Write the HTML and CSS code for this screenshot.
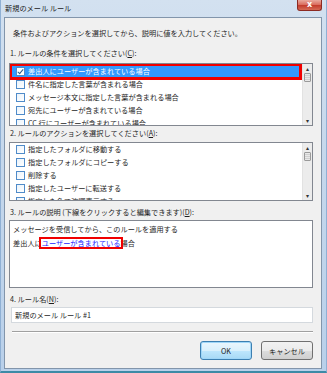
FILE: index.html
```html
<!DOCTYPE html>
<html>
  <head>
    <meta charset="utf-8">
    <link rel="stylesheet" href="styles.css">
  </head>
  <body>
    <div class="window">
      <div class="titlebar">
        <span class="title">新規のメール ルール</span>
        <span class="close">x</span>
      </div>

      <div class="client">
        <p class="intro">条件およびアクションを選択してから、説明に値を入力してください。</p>

        <div class="label label1">1. ルールの条件を選択してください(<u>C</u>):</div>
        <div class="listbox list1">
          <ul class="items">
            <li class="selected"><span class="check checked"></span>差出人にユーザーが含まれている場合</li>
            <li><span class="check"></span>件名に指定した言葉が含まれる場合</li>
            <li><span class="check"></span>メッセージ本文に指定した言葉が含まれる場合</li>
            <li><span class="check"></span>宛先にユーザーが含まれている場合</li>
            <li class="partial"><span class="check"></span>CC 行にユーザーが含まれている場合</li>
          </ul>
          <div class="scrollbar">
            <span class="arrow">&#9652;</span>
            <span class="thumb"></span>
            <span class="track"></span>
            <span class="arrow">&#9662;</span>
          </div>
        </div>

        <div class="label label2">2. ルールのアクションを選択してください(<u>A</u>):</div>
        <div class="listbox list2">
          <ul class="items">
            <li><span class="check"></span>指定したフォルダに移動する</li>
            <li><span class="check"></span>指定したフォルダにコピーする</li>
            <li><span class="check"></span>削除する</li>
            <li><span class="check"></span>指定したユーザーに転送する</li>
            <li class="partial"><span class="check"></span>指定した色で強調表示する</li>
          </ul>
          <div class="scrollbar">
            <span class="arrow">&#9652;</span>
            <span class="thumb"></span>
            <span class="track"></span>
            <span class="arrow">&#9662;</span>
          </div>
        </div>

        <div class="label label3">3. ルールの説明 (下線をクリックすると編集できます)(<u>D</u>):</div>
        <div class="description">
          <div class="line">メッセージを受信してから、このルールを適用する</div>
          <div class="line">差出人に<a href="#" class="marked">ユーザーが含まれている</a>場合</div>
        </div>

        <div class="label label4">4. ルール名(<u>N</u>):</div>
        <input type="text" class="name" value="新規のメール ルール #1">

        <div class="separator"></div>

        <div class="buttons">
          <button class="default">OK</button>
          <button>キャンセル</button>
        </div>
      </div>
    </div>
  </body>
</html>
```

FILE: styles.css
```css
html, body {
  margin: 0;
  padding: 0;
}

body {
  font-family: "Noto Sans CJK JP", "Noto Sans", sans-serif;
  font-size: 7.2px;
  color: #1e1e1e;
}

.window {
  width: 327px;
  height: 373px;
  box-sizing: border-box;
  display: flex;
  flex-direction: column;
  background: linear-gradient(to bottom, #d3e1f0 0%, #c6d8ec 40%, #b9d0ea 100%);
  border-left: 1px solid #8fb0d4;
  border-right: 1px solid #8fb0d4;
  border-bottom: 2px solid #3d8aa6;
}

.titlebar {
  height: 17px;
  display: flex;
  justify-content: space-between;
  align-items: flex-start;
  padding-left: 4px;
  padding-right: 4px;
}

.title {
  line-height: 17px;
  color: #222;
}

.close {
  width: 25px;
  height: 11px;
  line-height: 9px;
  text-align: center;
  color: #fff;
  font-family: "DejaVu Sans", sans-serif;
  font-weight: bold;
  font-size: 8px;
  border: 1px solid #8c2a22;
  border-top: none;
  border-radius: 0 0 3px 3px;
  box-sizing: border-box;
  background: linear-gradient(to bottom, #e9a99d 0%, #d9695a 50%, #c2392a 51%, #d56a54 100%);
}

.client {
  flex: 1;
  margin: 0 4px 2px 3px;
  background: #f0f0f0;
  border: 1px solid #8295ab;
  padding: 0 8px 0 4px;
  display: flex;
  flex-direction: column;
}

.intro {
  margin: 9px 0 0 4px;
  line-height: 13px;
}

.label {
  line-height: 13px;
  padding-left: 1px;
}

.label1 {
  margin-top: 7px;
}

.label2 {
  margin-top: 1px;
}

.label3,
.label4 {
  margin-top: 5px;
}

.label u {
  text-decoration: underline;
}

.listbox {
  box-sizing: border-box;
  border: 1px solid #828790;
  background: #fff;
  display: flex;
  overflow: hidden;
  flex: none;
}

.list1 {
  margin-top: 3px;
  height: 63px;
}

.list2 {
  margin-top: 2px;
  height: 59px;
}

.items {
  flex: 1;
  list-style: none;
  margin: 0;
  padding: 1px 1px 0 1px;
  overflow: hidden;
}

.items li {
  height: 13px;
  line-height: 13px;
  display: flex;
  align-items: center;
  padding-left: 5px;
  white-space: nowrap;
}

.list2 .items {
  padding-top: 0;
}

.items li.selected {
  background: #3399ff;
  color: #fff;
  position: relative;
}

.items li.selected::after {
  content: "";
  position: absolute;
  left: -2px;
  right: -1px;
  top: -2px;
  bottom: -2px;
  border: 3px solid #f00000;
}

.check {
  width: 9px;
  height: 9px;
  box-sizing: border-box;
  border: 1px solid #4f8bc9;
  background: linear-gradient(135deg, #eaf3fb, #ffffff);
  margin-right: 3px;
  flex: none;
  position: relative;
}

.check.checked {
  background: #fff;
}

.check.checked::before {
  content: "";
  position: absolute;
  left: 2px;
  top: 0;
  width: 2px;
  height: 5px;
  border-right: 1px solid #2a5a8e;
  border-bottom: 1px solid #2a5a8e;
  transform: rotate(40deg);
}

.scrollbar {
  width: 9px;
  flex: none;
  background: #ececec;
  border-left: 1px solid #e2e2e2;
  display: flex;
  flex-direction: column;
  align-items: center;
}

.arrow {
  height: 9px;
  line-height: 9px;
  font-size: 6px;
  color: #333;
  font-family: "DejaVu Sans", sans-serif;
}

.thumb {
  width: 7px;
  height: 9px;
  box-sizing: border-box;
  border: 1px solid #9a9a9a;
  border-radius: 1px;
  background: repeating-linear-gradient(to bottom, #e8e8e8 0, #e8e8e8 1px, #cfcfcf 1px, #cfcfcf 2px);
}

.track {
  flex: 1;
}

.description {
  margin-top: 1px;
  height: 68px;
  flex: none;
  box-sizing: border-box;
  border: 1px solid #828790;
  background: #fff;
  padding: 1px 0 0 3px;
}

.description .line {
  line-height: 14px;
  height: 14px;
}

.marked {
  color: #1a1aff;
  text-decoration: underline;
  position: relative;
}

.marked::after {
  content: "";
  position: absolute;
  left: -3px;
  right: -3px;
  top: -1px;
  bottom: -1px;
  border: 2px solid #f00000;
}

.name {
  height: 16px;
  flex: none;
  box-sizing: border-box;
  border: 1px solid #d4d9de;
  background: #fff;
  font-family: inherit;
  font-size: 7.2px;
  color: #1e1e1e;
  padding: 0 3px;
  margin: 1px 0 0 2px;
}

.separator {
  margin: 8px 0 0 3px;
  height: 1px;
  background: #a0a0a0;
  border-bottom: 1px solid #fff;
}

.buttons {
  margin-top: 8px;
  display: flex;
  justify-content: flex-end;
  gap: 9px;
}

.buttons button {
  width: 52px;
  height: 19px;
  font-family: inherit;
  font-size: 7.2px;
  color: #1e1e1e;
  border: 1px solid #707070;
  border-radius: 3px;
  background: linear-gradient(to bottom, #f2f2f2 0%, #ebebeb 50%, #dddddd 51%, #cfcfcf 100%);
  padding: 0;
}

.buttons button.default {
  border-color: #3c7fb1;
  box-shadow: inset 0 0 0 1px #9fd6f8;
  background: linear-gradient(to bottom, #eaf6fd 0%, #d9f0fc 50%, #bee6fd 51%, #a7d9f5 100%);
}
```
